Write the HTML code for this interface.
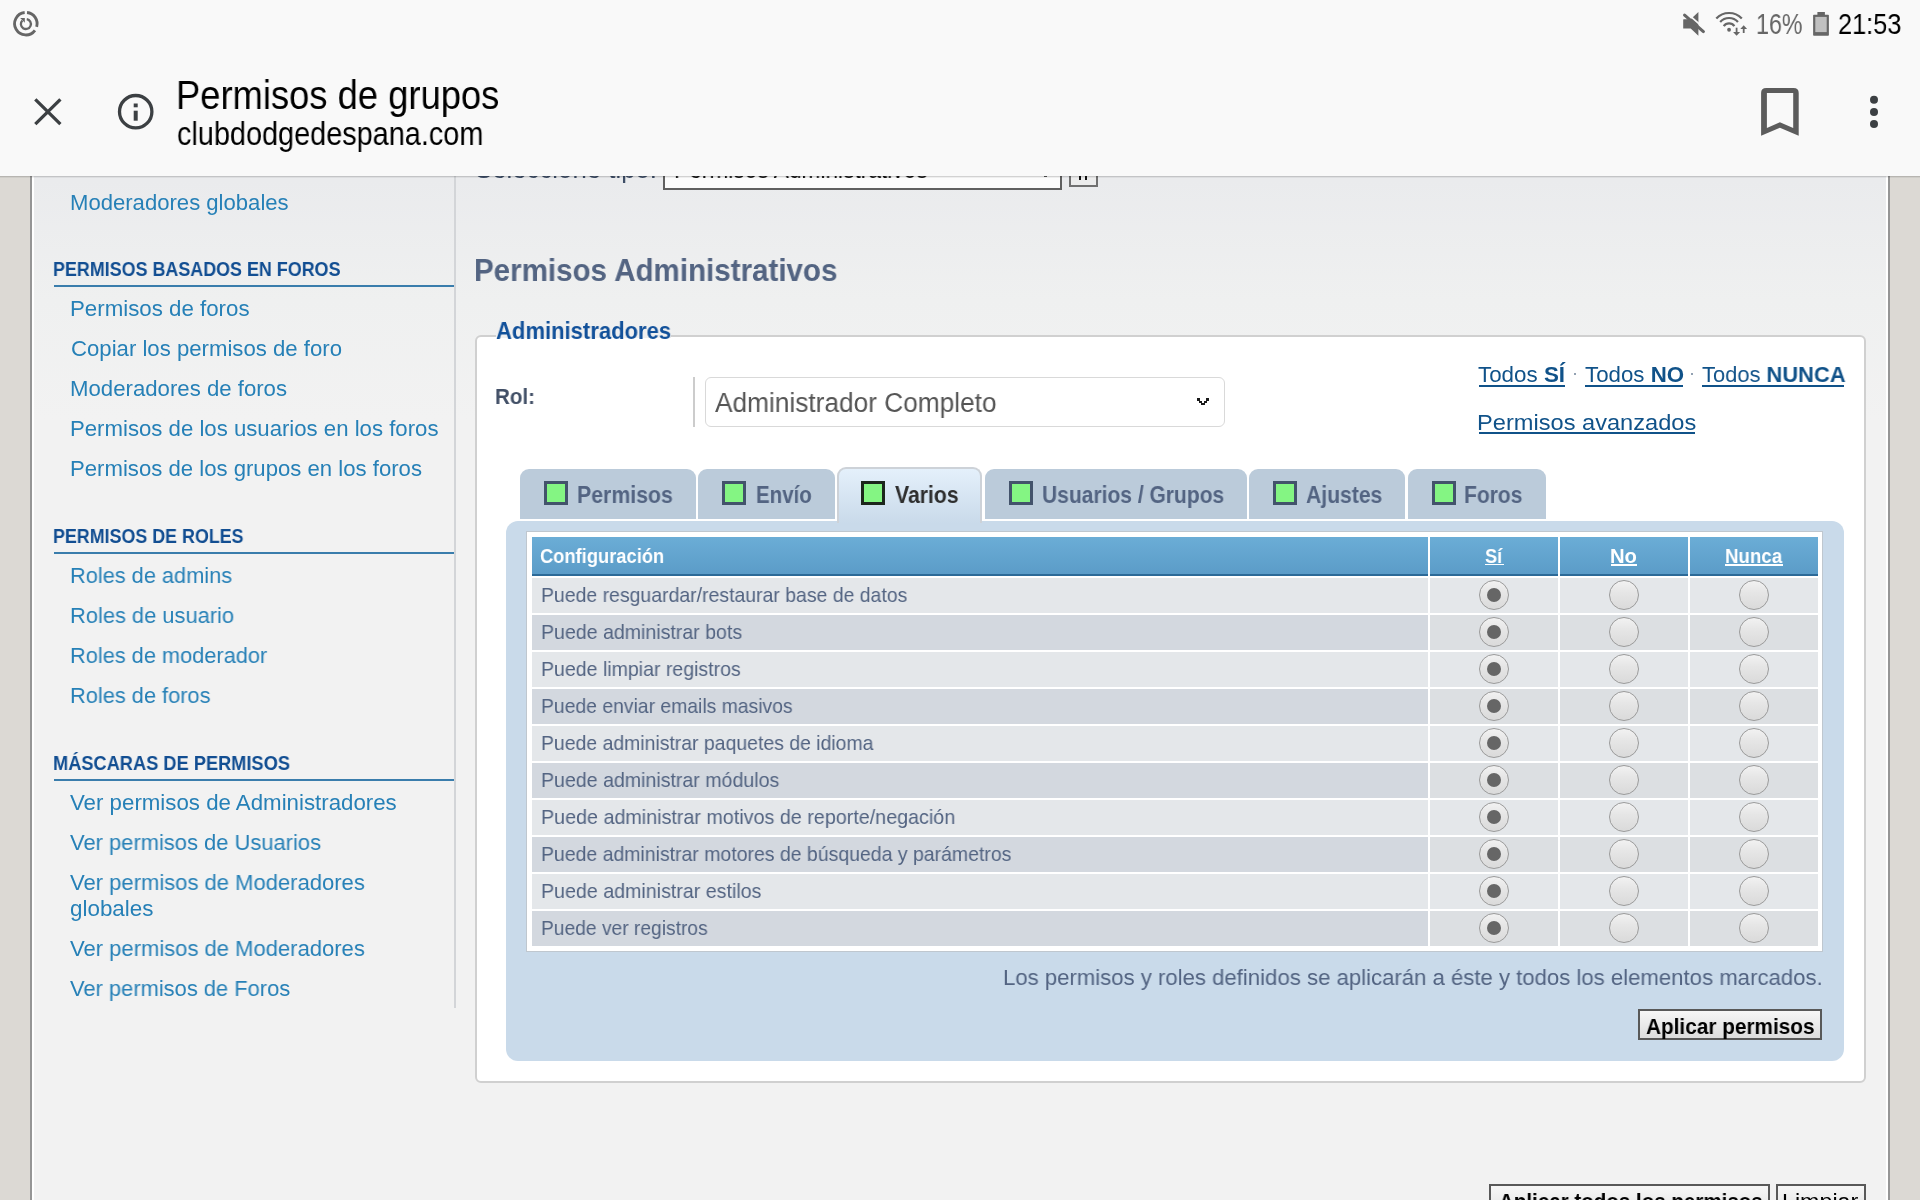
<!DOCTYPE html>
<html><head><meta charset="utf-8">
<style>
*{margin:0;padding:0;box-sizing:border-box}
html,body{width:1920px;height:1200px;overflow:hidden;background:#dcd9d4;font-family:"Liberation Sans",sans-serif}
.a{position:absolute}
.x{position:absolute;white-space:nowrap;line-height:1;transform-origin:0 0;will-change:transform}
.x b{font-weight:bold}
.rd{width:30px;height:30px;border-radius:50%;border:1.4px solid #9b9b9b;background:linear-gradient(#f2f2f2,#e6e6e6 40%,#dadada)}
.rd i{position:absolute;left:6.6px;top:6.6px;width:14px;height:14px;border-radius:50%;background:#666}
</style></head><body>
<div class="a" style="left:0;top:0;width:1920px;height:1200px;background:#dcd9d4"></div>
<div class="a" style="left:34px;top:0;width:1852px;height:1200px;background:linear-gradient(#eaebed 0px,#eaebed 180px,#eff0f0 300px,#f2f2f2 420px,#f2f2f2 1200px)"></div>
<div class="a" style="left:30px;top:0;width:2px;height:1200px;background:#959595"></div>
<div class="a" style="left:32px;top:0;width:2px;height:1200px;background:#fff"></div>
<div class="a" style="left:1886px;top:0;width:2px;height:1200px;background:#fff"></div>
<div class="a" style="left:1888px;top:0;width:2px;height:1200px;background:#959595"></div>
<div class="a" style="left:454px;top:0;width:2px;height:1008px;background:#d3d5d8"></div>
<div class="x" style="left:70.18px;top:192.00px;font-size:22.1px;color:#2680b7;">Moderadores globales</div>
<div class="x" style="left:52.99px;top:259.00px;font-size:20.3px;font-weight:bold;color:#124e92;transform:scaleX(0.8827);">PERMISOS BASADOS EN FOROS</div>
<div class="a" style="left:54px;top:285px;width:400px;height:2px;background:#3a7dac"></div>
<div class="x" style="left:70.16px;top:298.00px;font-size:22.1px;color:#2680b7;transform:scaleX(1.0084);">Permisos de foros</div>
<div class="x" style="left:70.89px;top:338.00px;font-size:22.1px;color:#2680b7;transform:scaleX(1.0032);">Copiar los permisos de foro</div>
<div class="x" style="left:70.17px;top:378.00px;font-size:22.1px;color:#2680b7;transform:scaleX(1.0042);">Moderadores de foros</div>
<div class="x" style="left:70.17px;top:418.00px;font-size:22.1px;color:#2680b7;transform:scaleX(1.0036);">Permisos de los usuarios en los foros</div>
<div class="x" style="left:70.17px;top:458.00px;font-size:22.1px;color:#2680b7;transform:scaleX(1.0022);">Permisos de los grupos en los foros</div>
<div class="x" style="left:52.99px;top:526.00px;font-size:20.3px;font-weight:bold;color:#124e92;transform:scaleX(0.8805);">PERMISOS DE ROLES</div>
<div class="a" style="left:54px;top:552px;width:400px;height:2px;background:#3a7dac"></div>
<div class="x" style="left:70.20px;top:565.00px;font-size:22.1px;color:#2680b7;transform:scaleX(0.9852);">Roles de admins</div>
<div class="x" style="left:70.20px;top:605.00px;font-size:22.1px;color:#2680b7;transform:scaleX(0.9896);">Roles de usuario</div>
<div class="x" style="left:70.20px;top:645.00px;font-size:22.1px;color:#2680b7;transform:scaleX(0.9855);">Roles de moderador</div>
<div class="x" style="left:70.20px;top:685.00px;font-size:22.1px;color:#2680b7;transform:scaleX(0.9865);">Roles de foros</div>
<div class="x" style="left:52.97px;top:753.00px;font-size:20.3px;font-weight:bold;color:#124e92;transform:scaleX(0.8985);">MÁSCARAS DE PERMISOS</div>
<div class="a" style="left:54px;top:779px;width:400px;height:2px;background:#3a7dac"></div>
<div class="x" style="left:70.49px;top:792.00px;font-size:22.1px;color:#2680b7;transform:scaleX(1.0079);">Ver permisos de Administradores</div>
<div class="x" style="left:70.49px;top:832.00px;font-size:22.1px;color:#2680b7;transform:scaleX(0.9926);">Ver permisos de Usuarios</div>
<div class="x" style="left:70.49px;top:872.00px;font-size:22.1px;color:#2680b7;transform:scaleX(0.9961);">Ver permisos de Moderadores</div>
<div class="x" style="left:70.25px;top:898.00px;font-size:22.1px;color:#2680b7;transform:scaleX(1.0135);">globales</div>
<div class="x" style="left:70.49px;top:938.00px;font-size:22.1px;color:#2680b7;transform:scaleX(0.9961);">Ver permisos de Moderadores</div>
<div class="x" style="left:70.49px;top:978.00px;font-size:22.1px;color:#2680b7;transform:scaleX(0.9908);">Ver permisos de Foros</div>
<div class="x" style="left:475.34px;top:157.00px;font-size:25px;color:#3d4d66;transform:scaleX(1.0310);">Seleccione tipo:</div>
<div class="a" style="left:663px;top:138px;width:399px;height:52px;border:2px solid #606060;background:#fcfcfc"></div>
<div class="x" style="left:674.13px;top:157.00px;font-size:25px;color:#111;transform:scaleX(0.9084);">Permisos Administrativos</div>
<div class="a" style="left:1043.5px;top:175px;width:3px;height:2px;background:#555"></div>
<div class="a" style="left:1069px;top:138px;width:29px;height:49px;border:2px solid #707070;background:#ececec"></div>
<div class="a" style="left:1078.8px;top:150px;width:2.1px;height:29.7px;background:#111"></div>
<div class="a" style="left:1084.8px;top:150px;width:2.1px;height:29.7px;background:#111"></div>
<div class="x" style="left:473.76px;top:255.00px;font-size:30.5px;font-weight:bold;color:#536482;transform:scaleX(0.9687);">Permisos Administrativos</div>
<div class="a" style="left:474.5px;top:334.5px;width:1391px;height:748px;border:2px solid #d0d0d0;border-radius:6px;background:#fff"></div>
<div class="a" style="left:495.5px;top:326px;width:175.5px;height:12px;background:#f0f0f0"></div>
<div class="x" style="left:495.85px;top:319.00px;font-size:24.3px;font-weight:bold;color:#12519a;transform:scaleX(0.9071);">Administradores</div>
<div class="x" style="left:495.01px;top:386.00px;font-size:22.5px;font-weight:bold;color:#425067;transform:scaleX(0.9139);">Rol:</div>
<div class="a" style="left:693px;top:377px;width:2px;height:50px;background:#cccccc"></div>
<div class="a" style="left:705px;top:377px;width:520px;height:49.5px;border:1.6px solid #d9d9d9;border-radius:6px;background:#fff"></div>
<div class="x" style="left:715.43px;top:390.00px;font-size:27px;color:#555555;transform:scaleX(0.9725);">Administrador Completo</div>
<svg class="a" style="left:1197px;top:397px" width="12" height="10" viewBox="0 0 12 10"><path d="M0 1h3v3h2v2h2V4h2V1h3v3h-2v2H8v2H4V6H2V4H0z" fill="#1a1a1a"/></svg>
<div class="x" style="left:1478.00px;top:364.00px;font-size:22px;color:#105289;transform:scaleX(1.0166);">Todos <b>SÍ</b></div>
<div class="x" style="left:1584.50px;top:364.00px;font-size:22px;color:#105289;transform:scaleX(1.0130);">Todos <b>NO</b></div>
<div class="x" style="left:1701.51px;top:364.00px;font-size:22px;color:#105289;transform:scaleX(0.9951);">Todos <b>NUNCA</b></div>
<div class="a" style="left:1478.5px;top:385px;width:86.5px;height:2px;background:#105289"></div>
<div class="a" style="left:1585px;top:385px;width:97.5px;height:2px;background:#105289"></div>
<div class="a" style="left:1702px;top:385px;width:141.8px;height:2px;background:#105289"></div>
<div class="a" style="left:1574px;top:372.5px;width:2.4px;height:2.4px;background:#6f8299;border-radius:1px"></div>
<div class="a" style="left:1691px;top:372.5px;width:2.4px;height:2.4px;background:#6f8299;border-radius:1px"></div>
<div class="x" style="left:1476.55px;top:412.00px;font-size:22px;color:#105289;transform:scaleX(1.0737);">Permisos avanzados</div>
<div class="a" style="left:1478.5px;top:432.2px;width:216.5px;height:2px;background:#105289"></div>
<div class="a" style="left:520px;top:469px;width:176.0px;height:50px;background:#bbcbda;border-radius:9px 9px 0 0"></div>
<div class="a" style="left:544px;top:481px;width:24px;height:24px;border:3px solid #43536b;background:#84f583"></div>
<div class="x" style="left:576.96px;top:484.00px;font-size:23.2px;font-weight:bold;color:#536482;transform:scaleX(0.9180);">Permisos</div>
<div class="a" style="left:698.2px;top:469px;width:136.6px;height:50px;background:#bbcbda;border-radius:9px 9px 0 0"></div>
<div class="a" style="left:722.2px;top:481px;width:24px;height:24px;border:3px solid #43536b;background:#84f583"></div>
<div class="x" style="left:755.52px;top:484.00px;font-size:23.2px;font-weight:bold;color:#536482;transform:scaleX(0.8827);">Envío</div>
<div class="a" style="left:984.5px;top:469px;width:262.5px;height:50px;background:#bbcbda;border-radius:9px 9px 0 0"></div>
<div class="a" style="left:1008.5px;top:481px;width:24px;height:24px;border:3px solid #43536b;background:#84f583"></div>
<div class="x" style="left:1041.54px;top:484.00px;font-size:23.2px;font-weight:bold;color:#536482;transform:scaleX(0.9066);">Usuarios / Grupos</div>
<div class="a" style="left:1249px;top:469px;width:156.4px;height:50px;background:#bbcbda;border-radius:9px 9px 0 0"></div>
<div class="a" style="left:1273px;top:481px;width:24px;height:24px;border:3px solid #43536b;background:#84f583"></div>
<div class="x" style="left:1306.47px;top:484.00px;font-size:23.2px;font-weight:bold;color:#536482;transform:scaleX(0.9113);">Ajustes</div>
<div class="a" style="left:1408.3px;top:469px;width:137.5px;height:50px;background:#bbcbda;border-radius:9px 9px 0 0"></div>
<div class="a" style="left:1432.3px;top:481px;width:24px;height:24px;border:3px solid #43536b;background:#84f583"></div>
<div class="x" style="left:1464.38px;top:484.00px;font-size:23.2px;font-weight:bold;color:#536482;transform:scaleX(0.9073);">Foros</div>
<div class="a" style="left:506px;top:520.5px;width:1338px;height:540.5px;background:#c9daea;border-radius:12px"></div>
<div class="a" style="left:837.4px;top:467px;width:144.9px;height:56px;background:linear-gradient(#e4f0fb,#c9daea);border:2px solid #cdd2d8;border-bottom:none;border-radius:9px 9px 0 0"></div>
<div class="a" style="left:861.4px;top:481px;width:24px;height:24px;border:3px solid #1c261c;background:#84f583"></div>
<div class="x" style="left:895.24px;top:484.00px;font-size:23.2px;font-weight:bold;color:#2e2e2e;transform:scaleX(0.9139);">Varios</div>
<div class="a" style="left:526.2px;top:531.2px;width:1297.2px;height:420.6px;background:#fff;border:1.8px solid #bfc7cf"></div>
<div class="a" style="left:532px;top:537.2px;width:895.8px;height:38.7px;background:linear-gradient(#6badd6,#5b9cc8);border-bottom:2px solid #2c6a98"></div>
<div class="a" style="left:1430.2px;top:537.2px;width:127.7px;height:38.7px;background:linear-gradient(#6badd6,#5b9cc8);border-bottom:2px solid #2c6a98"></div>
<div class="a" style="left:1560px;top:537.2px;width:127.8px;height:38.7px;background:linear-gradient(#6badd6,#5b9cc8);border-bottom:2px solid #2c6a98"></div>
<div class="a" style="left:1690px;top:537.2px;width:128.0px;height:38.7px;background:linear-gradient(#6badd6,#5b9cc8);border-bottom:2px solid #2c6a98"></div>
<div class="x" style="left:539.67px;top:546.00px;font-size:20.25px;font-weight:bold;color:#fff;transform:scaleX(0.9052);">Configuración</div>
<div class="x" style="left:1485.16px;top:546.00px;font-size:20.25px;font-weight:bold;color:#fff;transform:scaleX(0.8960);">Sí</div>
<div class="a" style="left:1484.7px;top:563.7px;width:19.1px;height:1.7px;background:#fff"></div>
<div class="x" style="left:1610.44px;top:546.00px;font-size:20.25px;font-weight:bold;color:#fff;transform:scaleX(0.9937);">No</div>
<div class="a" style="left:1610.8px;top:564.0px;width:26.7px;height:1.7px;background:#fff"></div>
<div class="x" style="left:1724.74px;top:546.00px;font-size:20.25px;font-weight:bold;color:#fff;transform:scaleX(0.9233);">Nunca</div>
<div class="a" style="left:1725px;top:564.0px;width:58.0px;height:1.7px;background:#fff"></div>
<div class="a" style="left:532px;top:578.10px;width:895.8px;height:34.7px;background:#e4e7ea"></div>
<div class="a" style="left:1430.2px;top:578.10px;width:127.7px;height:34.7px;background:#e4e7ea"></div>
<div class="a rd" style="left:1478.95px;top:580.10px"><i></i></div>
<div class="a" style="left:1560px;top:578.10px;width:127.8px;height:34.7px;background:#e4e7ea"></div>
<div class="a rd" style="left:1608.80px;top:580.10px"></div>
<div class="a" style="left:1690px;top:578.10px;width:128.0px;height:34.7px;background:#e4e7ea"></div>
<div class="a rd" style="left:1738.90px;top:580.10px"></div>
<div class="x" style="left:540.60px;top:585.00px;font-size:20.8px;color:#536482;transform:scaleX(0.9347);">Puede resguardar/restaurar base de datos</div>
<div class="a" style="left:532px;top:615.13px;width:895.8px;height:34.7px;background:#d3d8df"></div>
<div class="a" style="left:1430.2px;top:615.13px;width:127.7px;height:34.7px;background:#dcdfe2"></div>
<div class="a rd" style="left:1478.95px;top:617.13px"><i></i></div>
<div class="a" style="left:1560px;top:615.13px;width:127.8px;height:34.7px;background:#dcdfe2"></div>
<div class="a rd" style="left:1608.80px;top:617.13px"></div>
<div class="a" style="left:1690px;top:615.13px;width:128.0px;height:34.7px;background:#dcdfe2"></div>
<div class="a rd" style="left:1738.90px;top:617.13px"></div>
<div class="x" style="left:540.59px;top:622.00px;font-size:20.8px;color:#536482;transform:scaleX(0.9407);">Puede administrar bots</div>
<div class="a" style="left:532px;top:652.16px;width:895.8px;height:34.7px;background:#e4e7ea"></div>
<div class="a" style="left:1430.2px;top:652.16px;width:127.7px;height:34.7px;background:#e4e7ea"></div>
<div class="a rd" style="left:1478.95px;top:654.16px"><i></i></div>
<div class="a" style="left:1560px;top:652.16px;width:127.8px;height:34.7px;background:#e4e7ea"></div>
<div class="a rd" style="left:1608.80px;top:654.16px"></div>
<div class="a" style="left:1690px;top:652.16px;width:128.0px;height:34.7px;background:#e4e7ea"></div>
<div class="a rd" style="left:1738.90px;top:654.16px"></div>
<div class="x" style="left:540.59px;top:659.00px;font-size:20.8px;color:#536482;transform:scaleX(0.9392);">Puede limpiar registros</div>
<div class="a" style="left:532px;top:689.19px;width:895.8px;height:34.7px;background:#d3d8df"></div>
<div class="a" style="left:1430.2px;top:689.19px;width:127.7px;height:34.7px;background:#dcdfe2"></div>
<div class="a rd" style="left:1478.95px;top:691.19px"><i></i></div>
<div class="a" style="left:1560px;top:689.19px;width:127.8px;height:34.7px;background:#dcdfe2"></div>
<div class="a rd" style="left:1608.80px;top:691.19px"></div>
<div class="a" style="left:1690px;top:689.19px;width:128.0px;height:34.7px;background:#dcdfe2"></div>
<div class="a rd" style="left:1738.90px;top:691.19px"></div>
<div class="x" style="left:540.60px;top:696.00px;font-size:20.8px;color:#536482;transform:scaleX(0.9304);">Puede enviar emails masivos</div>
<div class="a" style="left:532px;top:726.22px;width:895.8px;height:34.7px;background:#e4e7ea"></div>
<div class="a" style="left:1430.2px;top:726.22px;width:127.7px;height:34.7px;background:#e4e7ea"></div>
<div class="a rd" style="left:1478.95px;top:728.22px"><i></i></div>
<div class="a" style="left:1560px;top:726.22px;width:127.8px;height:34.7px;background:#e4e7ea"></div>
<div class="a rd" style="left:1608.80px;top:728.22px"></div>
<div class="a" style="left:1690px;top:726.22px;width:128.0px;height:34.7px;background:#e4e7ea"></div>
<div class="a rd" style="left:1738.90px;top:728.22px"></div>
<div class="x" style="left:540.60px;top:733.00px;font-size:20.8px;color:#536482;transform:scaleX(0.9336);">Puede administrar paquetes de idioma</div>
<div class="a" style="left:532px;top:763.25px;width:895.8px;height:34.7px;background:#d3d8df"></div>
<div class="a" style="left:1430.2px;top:763.25px;width:127.7px;height:34.7px;background:#dcdfe2"></div>
<div class="a rd" style="left:1478.95px;top:765.25px"><i></i></div>
<div class="a" style="left:1560px;top:763.25px;width:127.8px;height:34.7px;background:#dcdfe2"></div>
<div class="a rd" style="left:1608.80px;top:765.25px"></div>
<div class="a" style="left:1690px;top:763.25px;width:128.0px;height:34.7px;background:#dcdfe2"></div>
<div class="a rd" style="left:1738.90px;top:765.25px"></div>
<div class="x" style="left:540.58px;top:770.00px;font-size:20.8px;color:#536482;transform:scaleX(0.9412);">Puede administrar módulos</div>
<div class="a" style="left:532px;top:800.28px;width:895.8px;height:34.7px;background:#e4e7ea"></div>
<div class="a" style="left:1430.2px;top:800.28px;width:127.7px;height:34.7px;background:#e4e7ea"></div>
<div class="a rd" style="left:1478.95px;top:802.28px"><i></i></div>
<div class="a" style="left:1560px;top:800.28px;width:127.8px;height:34.7px;background:#e4e7ea"></div>
<div class="a rd" style="left:1608.80px;top:802.28px"></div>
<div class="a" style="left:1690px;top:800.28px;width:128.0px;height:34.7px;background:#e4e7ea"></div>
<div class="a rd" style="left:1738.90px;top:802.28px"></div>
<div class="x" style="left:540.57px;top:807.00px;font-size:20.8px;color:#536482;transform:scaleX(0.9479);">Puede administrar motivos de reporte/negación</div>
<div class="a" style="left:532px;top:837.31px;width:895.8px;height:34.7px;background:#d3d8df"></div>
<div class="a" style="left:1430.2px;top:837.31px;width:127.7px;height:34.7px;background:#dcdfe2"></div>
<div class="a rd" style="left:1478.95px;top:839.31px"><i></i></div>
<div class="a" style="left:1560px;top:837.31px;width:127.8px;height:34.7px;background:#dcdfe2"></div>
<div class="a rd" style="left:1608.80px;top:839.31px"></div>
<div class="a" style="left:1690px;top:837.31px;width:128.0px;height:34.7px;background:#dcdfe2"></div>
<div class="a rd" style="left:1738.90px;top:839.31px"></div>
<div class="x" style="left:540.60px;top:844.00px;font-size:20.8px;color:#536482;transform:scaleX(0.9353);">Puede administrar motores de búsqueda y parámetros</div>
<div class="a" style="left:532px;top:874.34px;width:895.8px;height:34.7px;background:#e4e7ea"></div>
<div class="a" style="left:1430.2px;top:874.34px;width:127.7px;height:34.7px;background:#e4e7ea"></div>
<div class="a rd" style="left:1478.95px;top:876.34px"><i></i></div>
<div class="a" style="left:1560px;top:874.34px;width:127.8px;height:34.7px;background:#e4e7ea"></div>
<div class="a rd" style="left:1608.80px;top:876.34px"></div>
<div class="a" style="left:1690px;top:874.34px;width:128.0px;height:34.7px;background:#e4e7ea"></div>
<div class="a rd" style="left:1738.90px;top:876.34px"></div>
<div class="x" style="left:540.58px;top:881.00px;font-size:20.8px;color:#536482;transform:scaleX(0.9442);">Puede administrar estilos</div>
<div class="a" style="left:532px;top:911.37px;width:895.8px;height:34.7px;background:#d3d8df"></div>
<div class="a" style="left:1430.2px;top:911.37px;width:127.7px;height:34.7px;background:#dcdfe2"></div>
<div class="a rd" style="left:1478.95px;top:913.37px"><i></i></div>
<div class="a" style="left:1560px;top:911.37px;width:127.8px;height:34.7px;background:#dcdfe2"></div>
<div class="a rd" style="left:1608.80px;top:913.37px"></div>
<div class="a" style="left:1690px;top:911.37px;width:128.0px;height:34.7px;background:#dcdfe2"></div>
<div class="a rd" style="left:1738.90px;top:913.37px"></div>
<div class="x" style="left:540.61px;top:918.00px;font-size:20.8px;color:#536482;transform:scaleX(0.9242);">Puede ver registros</div>
<div class="x" style="left:1002.77px;top:967.00px;font-size:22.5px;color:#536482;transform:scaleX(0.9840);">Los permisos y roles definidos se aplicarán a éste y todos los elementos marcados.</div>
<div class="a" style="left:1638.3px;top:1009.2px;width:183.5px;height:31.3px;border:2px solid #595959;background:linear-gradient(#f7f7f7,#dddddd)"></div>
<div class="x" style="left:1645.88px;top:1015.00px;font-size:22.9px;font-weight:bold;color:#000;transform:scaleX(0.9073);">Aplicar permisos</div>
<div class="a" style="left:1489.2px;top:1184px;width:280.5px;height:40px;border:2px solid #595959;background:linear-gradient(#f7f7f7,#dddddd)"></div>
<div class="x" style="left:1498.99px;top:1190.00px;font-size:22.9px;font-weight:bold;color:#000;transform:scaleX(0.8976);">Aplicar todos los permisos</div>
<div class="a" style="left:1775.8px;top:1184px;width:90.2px;height:40px;border:2px solid #595959;background:linear-gradient(#f7f7f7,#dddddd)"></div>
<div class="x" style="left:1782.08px;top:1190.00px;font-size:22.9px;color:#000;transform:scaleX(1.0162);">Limpiar</div>
<div class="a" style="left:0;top:0;width:1920px;height:48px;background:#f9f9f9"></div>
<div class="a" style="left:0;top:176px;width:1920px;height:2px;background:linear-gradient(rgba(0,0,0,.22),rgba(0,0,0,0))"></div>
<div class="a" style="left:0;top:48px;width:1920px;height:128px;background:#f9f9f9"></div>
<svg class="a" style="left:0;top:0" width="1920" height="176" viewBox="0 0 1920 176">
<g fill="none" stroke="#666" stroke-width="2.85">
<path d="M27.03 12.51A11.25 11.25 0 0 1 36.66 26.8"/>
<path d="M34.95 30.31A11.25 11.25 0 1 1 24.67 12.51"/>
</g>
<path d="M26.77 19.08A5 5 0 1 1 22.36 20.46" fill="none" stroke="#666" stroke-width="2.3"/>
<path d="M20.2 18.1H24.8V22.8Z" fill="#666"/>
<path d="M35.3 99.3L60.4 124.1M60.4 99.3L35.3 124.1" stroke="#3c4043" stroke-width="3.3"/>
<circle cx="135.7" cy="111.7" r="16.2" fill="none" stroke="#3c4043" stroke-width="3.3"/>
<rect x="133.7" y="103.5" width="4" height="3.8" fill="#3c4043"/>
<rect x="133.7" y="110.7" width="4" height="10" fill="#3c4043"/>
<path fill-rule="evenodd" fill="#5c5c5c" d="M1761.1 135.8V93Q1761.1 87.9 1766.2 87.9H1793.6Q1798.7 87.9 1798.7 93V135.8L1779.9 127.8ZM1766.9 128.1V93.1H1793.2V128.1L1779.9 122.2Z"/>
<circle cx="1874" cy="99.8" r="4" fill="#3c4043"/>
<circle cx="1874" cy="111.9" r="4" fill="#3c4043"/>
<circle cx="1874" cy="123.9" r="4" fill="#3c4043"/>
<path d="M1683.2 19.6Q1683.2 19.2 1684 19.2H1690.7L1698.4 12V35.7L1690.7 28.4H1683.2Z" fill="#666"/>
<path d="M1686.6 12.9L1705.4 29.4" stroke="#f9f9f9" stroke-width="1.8"/>
<path d="M1684.6 15.1L1703.4 31.6" stroke="#666" stroke-width="3.1" stroke-linecap="round"/>
<g fill="none" stroke="#666" stroke-width="2.2">
<path d="M1723.75 26.19A6.4 6.4 0 0 1 1734.37 26.19"/>
<path d="M1720.16 22.03A11.8 11.8 0 0 1 1737.96 22.03"/>
<path d="M1716.3 18.6A17.3 17.3 0 0 1 1741.8 18.6"/>
</g>
<circle cx="1729.06" cy="29.77" r="1.9" fill="#666"/>
<path d="M1736.6 27.7V33" stroke="#666" stroke-width="1.8"/>
<path d="M1733.1 32.1H1740.1L1736.6 35.7Z" fill="#666"/>
<path d="M1743.7 28.5V33" stroke="#666" stroke-width="1.8"/>
<path d="M1740.3 29H1747.1L1743.7 25.2Z" fill="#666"/>
<rect x="1817.4" y="12" width="7.5" height="3" fill="#666"/>
<rect x="1813.1" y="14.7" width="15.8" height="21" rx="0.8" fill="#666"/>
<rect x="1815.3" y="16.9" width="11.4" height="15.2" fill="#c0c0c0"/>
</svg>

<div class="x" style="left:1755.76px;top:9.00px;font-size:29.5px;color:#666;transform:scaleX(0.7881);">16%</div>
<div class="x" style="left:1837.73px;top:9.00px;font-size:29.5px;color:#000;transform:scaleX(0.8580);">21:53</div>
<div class="x" style="left:175.90px;top:75.00px;font-size:41px;color:#000;transform:scaleX(0.8869);">Permisos de grupos</div>
<div class="x" style="left:176.77px;top:117.00px;font-size:33px;color:#000;transform:scaleX(0.8743);">clubdodgedespana.com</div>
</body></html>
